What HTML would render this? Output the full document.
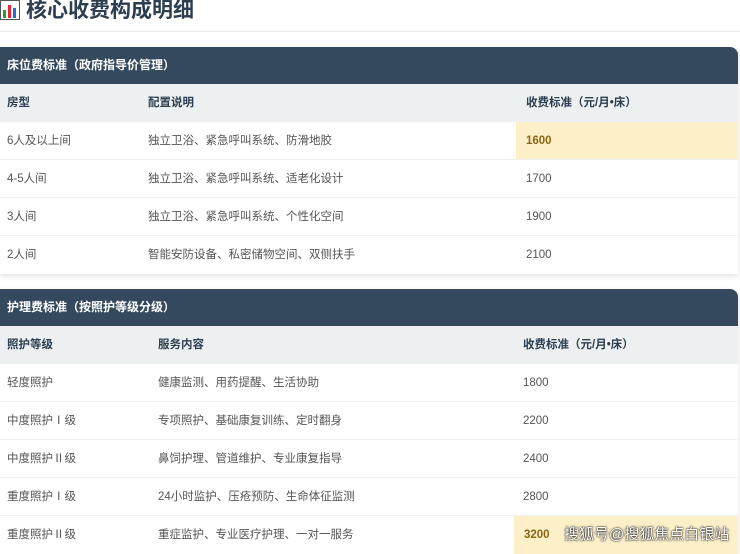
<!DOCTYPE html><html><head><meta charset="utf-8"><style>
body{margin:0;width:740px;height:550px;overflow:hidden;background:#fff;font-family:"Liberation Sans","Noto Sans CJK SC",sans-serif;}
.t{position:absolute;left:0;top:-6px;font-size:21px;font-weight:bold;color:#2c3e50;height:34px;line-height:34px}
.hr{position:absolute;left:0;top:31px;width:740px;height:1px;background:#e6eaee}
.card{position:absolute;left:0;width:738px;border-radius:0 8px 0 0;box-shadow:0 2px 6px rgba(0,0,0,.12);overflow:hidden;background:#fff}
.h{height:37px;line-height:37px;background:#34495e;color:#fff;font-size:12px;font-weight:bold;padding-left:7px}
.r{position:relative;height:38px;border-bottom:1px solid #eef0f2;font-size:11.5px;color:#555;box-sizing:border-box}
.r span{position:absolute;top:0;line-height:38px}
.ch{background:#ecf0f1;color:#2c3e50;font-weight:bold;border:none}
.hl{position:absolute;top:0;bottom:0;right:0;background:#fdf0c8}
.hl b{color:#8a6511;position:absolute;left:10px;line-height:38px}
</style></head><body>
<div class="t"><svg width="20" height="20" viewBox="0 0 20 20" style="vertical-align:-3px;margin-right:6px"><rect x="0.5" y="0.5" width="19" height="19" fill="#fff" stroke="#555"/><rect x="3" y="10" width="3" height="8" fill="#2a9d3a"/><rect x="8" y="5" width="3" height="13" fill="#e23"/><rect x="13" y="8" width="3" height="10" fill="#2a6fd0"/></svg>核心收费构成明细</div>
<div class="hr"></div>
<div class="card" style="top:47px">
<div class="h">床位费标准（政府指导价管理）</div>
<div class="r ch"><span style="left:7px">房型</span><span style="left:148px">配置说明</span><span style="left:526px">收费标准（元/月•床）</span></div>
<div class="r"><span style="left:7px">6人及以上间</span><span style="left:148px">独立卫浴、紧急呼叫系统、防滑地胶</span><div class="hl" style="left:516px"><b>1600</b></div></div>
<div class="r"><span style="left:7px">4-5人间</span><span style="left:148px">独立卫浴、紧急呼叫系统、适老化设计</span><span style="left:526px">1700</span></div>
<div class="r"><span style="left:7px">3人间</span><span style="left:148px">独立卫浴、紧急呼叫系统、个性化空间</span><span style="left:526px">1900</span></div>
<div class="r" style="border:none"><span style="left:7px">2人间</span><span style="left:148px">智能安防设备、私密储物空间、双侧扶手</span><span style="left:526px">2100</span></div>
</div>
<div class="card" style="top:289px">
<div class="h">护理费标准（按照护等级分级）</div>
<div class="r ch"><span style="left:7px">照护等级</span><span style="left:158px">服务内容</span><span style="left:523px">收费标准（元/月•床）</span></div>
<div class="r"><span style="left:7px">轻度照护</span><span style="left:158px">健康监测、用药提醒、生活协助</span><span style="left:523px">1800</span></div>
<div class="r"><span style="left:7px">中度照护Ⅰ级</span><span style="left:158px">专项照护、基础康复训练、定时翻身</span><span style="left:523px">2200</span></div>
<div class="r"><span style="left:7px">中度照护Ⅱ级</span><span style="left:158px">鼻饲护理、管道维护、专业康复指导</span><span style="left:523px">2400</span></div>
<div class="r"><span style="left:7px">重度照护Ⅰ级</span><span style="left:158px">24小时监护、压疮预防、生命体征监测</span><span style="left:523px">2800</span></div>
<div class="r" style="border:none"><span style="left:7px">重度照护Ⅱ级</span><span style="left:158px">重症监护、专业医疗护理、一对一服务</span><div class="hl" style="left:514px"><b>3200</b><span style="left:50px;color:#fff;font-size:15px;text-shadow:0 0 2px #000,0 0 1px #000;line-height:38px">搜狐号@搜狐焦点白银站</span></div></div>
</div>
</body></html>
